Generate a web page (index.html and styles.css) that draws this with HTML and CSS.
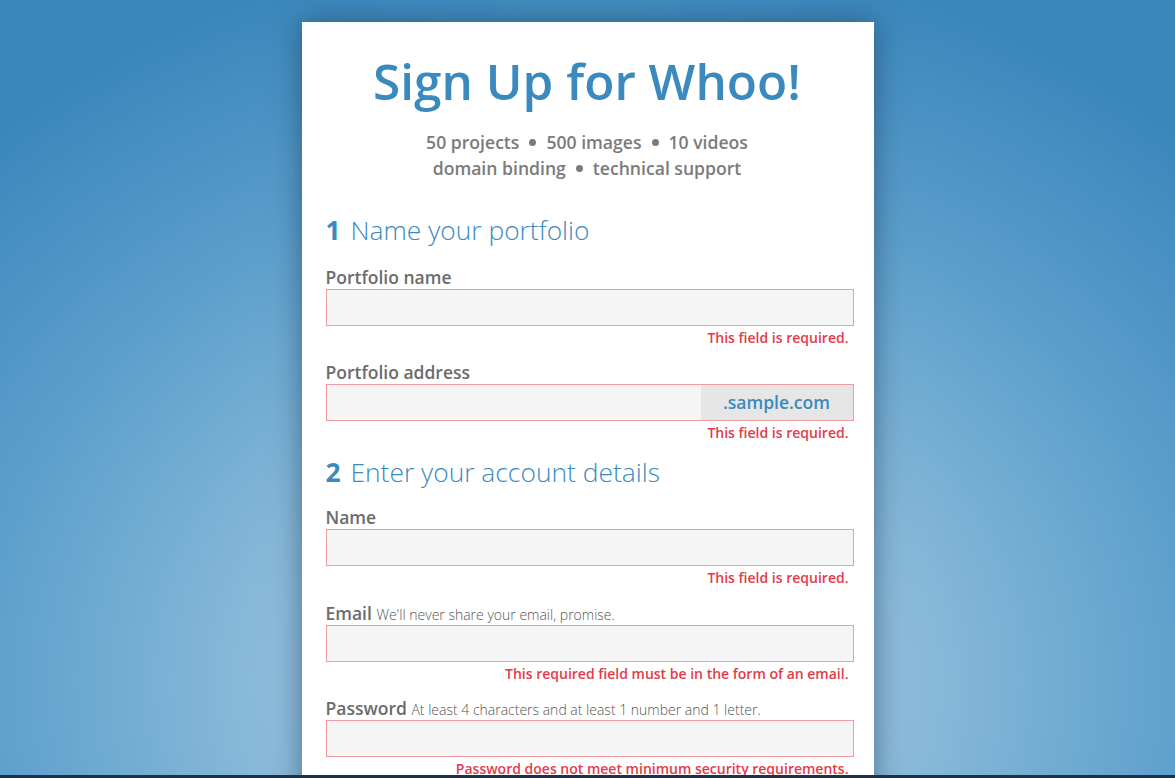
FILE: index.html
```html
<!DOCTYPE html>
<html lang="en">
<head>
<meta charset="utf-8">
<title>Sign Up for Whoo!</title>
<link rel="stylesheet" href="styles.css">
</head>
<body>
<div class="viewport">
  <div class="card">
    <header class="head">
      <h1 class="title">Sign Up for Whoo!</h1>
      <p class="features">50 projects<span class="dot"></span>500 images<span class="dot"></span>10 videos<br>domain binding<span class="dot"></span>technical support</p>
    </header>

    <h2 class="step"><span class="num">1</span> Name your portfolio</h2>

    <div class="field">
      <label class="label">Portfolio name</label>
      <div class="input"></div>
      <div class="error">This field is required.</div>
    </div>

    <div class="field">
      <label class="label">Portfolio address</label>
      <div class="input addon-wrap"><div class="addon-space"></div><div class="addon">.sample.com</div></div>
      <div class="error">This field is required.</div>
    </div>

    <h2 class="step step2"><span class="num">2</span> Enter your account details</h2>

    <div class="field">
      <label class="label">Name</label>
      <div class="input"></div>
      <div class="error">This field is required.</div>
    </div>

    <div class="field field-hint">
      <label class="label">Email <span class="hint">We'll never share your email, promise.</span></label>
      <div class="input"></div>
      <div class="error">This required field must be in the form of an email.</div>
    </div>

    <div class="field">
      <label class="label">Password <span class="hint">At least 4 characters and at least 1 number and 1 letter.</span></label>
      <div class="input"></div>
      <div class="error">Password does not meet minimum security requirements.</div>
    </div>
  </div>
</div>
<div class="edge"></div>
</body>
</html>
```

FILE: styles.css
```css
* { box-sizing: border-box; }
html, body { margin: 0; padding: 0; height: 100%; }
body {
  font-family: "Open Sans", "Noto Sans", sans-serif;
  background: #1f3049;
  overflow: hidden;
}
.viewport {
  height: 775px;
  overflow: hidden;
  background: radial-gradient(ellipse 75% 95% at 50% 88%, #a3cbe3 0%, #8dbcdb 35%, #5b9ecb 70%, #3a87bc 100%);
  display: flex;
  justify-content: center;
  padding-top: 22px;
}
.card {
  width: 572px;
  background: #fff;
  padding: 0 20px 0 24px;
  box-shadow: 0 0 28px rgba(20, 50, 80, 0.55);
  min-height: 900px;
}
.head {
  text-align: center;
  margin-right: 5px;
}
.title {
  margin: 0;
  padding-top: 26px;
  font-size: 49.5px;
  line-height: 66px;
  font-weight: 600;
  color: #3a8abf;
}
.features {
  margin: 15px 0 0;
  font-size: 17.6px;
  line-height: 26px;
  font-weight: 600;
  color: #7b7b7b;
}
.dot {
  display: inline-block;
  width: 7px;
  height: 7px;
  border-radius: 50%;
  background: #7b7b7b;
  margin: 0 10px;
  vertical-align: 3px;
}
.step {
  margin: 31px 0 0;
  font-size: 26.4px;
  line-height: 36px;
  font-weight: 300;
  color: #3a8abf;
}
.step2 { margin-top: 11px; }
.num { font-weight: 700; margin-right: 3px; }
.field { margin-top: 12px; }
.field-hint { margin-top: 13px; }
.step + .field { margin-top: 17px; }
.step2 + .field { margin-top: 15px; }
.label {
  display: block;
  font-size: 17.5px;
  line-height: 24px;
  font-weight: 600;
  color: #6b6b6b;
}
.hint {
  font-size: 14px;
  line-height: 16px;
  font-weight: 300;
  color: #555;
}
.input {
  height: 37px;
  margin-top: 0;
  border: 1px solid #f09aa2;
  background: #f5f5f5;
}
.addon-wrap { display: flex; }
.addon-space { flex: 1; }
.addon {
  width: 152px;
  background: #e6e6e6;
  color: #3a8abf;
  font-size: 17.5px;
  font-weight: 600;
  line-height: 35px;
  text-align: center;
}
.error {
  text-align: right;
  padding-right: 5px;
  font-size: 14px;
  line-height: 20px;
  font-weight: 600;
  color: #e23b4b;
  margin-top: 2px;
}
.edge { height: 3px; background: #1f3049; }
```
